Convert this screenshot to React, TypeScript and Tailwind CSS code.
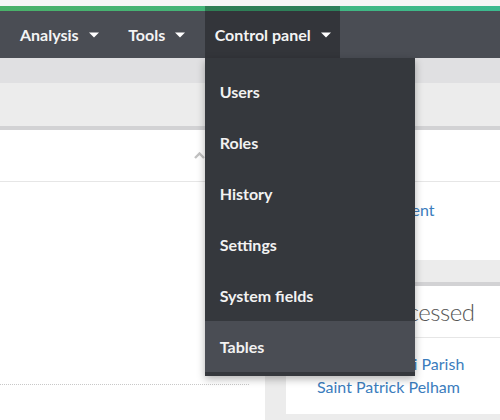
import { Fragment } from "react";

const navItems = ["Analysis", "Tools", "Control panel"];
const menuItems = ["Users", "Roles", "History", "Settings", "System fields", "Tables"];

function Caret() {
  return (
    <svg width="10" height="6" viewBox="0 0 10 6" className="ml-[10px]">
      <path d="M0 0.5h10L5 5.5z" fill="#ffffff" />
    </svg>
  );
}

export default function App() {
  return (
    <div className="w-[500px] h-[420px] overflow-hidden bg-[#ececec] font-['Lato','Open_Sans',sans-serif]">
      <div className="h-[6px] bg-[#f6f6f6]" />

      {/* navbar: green strip on top, gray bar below */}
      <div className="h-[52px] flex pl-[10px] gap-[10.5px] bg-[image:linear-gradient(to_bottom,transparent_5px,#4a4d54_5px),linear-gradient(to_right,#4ab169,#3cba8f)]">
        {navItems.map((item) => {
          const active = item === "Control panel";
          return (
            <div
              key={item}
              className={
                active
                  ? "relative flex items-center pt-[5px] pl-[10px] pr-[9px] bg-black/30"
                  : "relative flex items-center pt-[5px] pl-[10px] pr-[9px]"
              }
            >
              <span className="text-[16px] font-bold text-[#f4f4f4]">{item}</span>
              <Caret />
              {active && (
                <div className="absolute left-0 top-full w-[210px] pt-[8px] pb-[4px] bg-[#35383d] shadow-[0_3px_8px_rgba(0,0,0,0.3)] z-10">
                  {menuItems.map((m) => (
                    <div
                      key={m}
                      className={
                        m === "Tables"
                          ? "h-[51px] flex items-center pl-[15px] text-[16px] font-bold text-[#f2f2f2] bg-[#4a4d54]"
                          : "h-[51px] flex items-center pl-[15px] text-[16px] font-bold text-[#f2f2f2]"
                      }
                    >
                      {m}
                    </div>
                  ))}
                </div>
              )}
            </div>
          );
        })}
      </div>

      <div className="h-[25px] bg-[#e0e0e2]" />
      <div className="h-[43px] bg-[#ececec]" />

      <div className="flex gap-[21px]">
        {/* left panel */}
        <div className="w-[265px] shrink-0 h-[300px] bg-white border-t-4 border-[#d2d2d4]">
          <div className="h-[52px] flex items-center justify-end pr-[60px] border-b border-[#e6e6e6]">
            <svg width="11" height="7" viewBox="0 0 11 7">
              <path d="M1 6l4.5-4.5 4.5 4.5" fill="none" stroke="#c2c2c2" strokeWidth="2.4" />
            </svg>
          </div>
          <div className="w-[249px] h-[203px] border-b border-dotted border-[#c8c8c8]" />
        </div>

        {/* right column */}
        <div className="flex-1 min-w-0 flex flex-col gap-[22px]">
          <div className="h-[134px] bg-white border-t-4 border-[#d2d2d4]">
            <div className="h-[52px] flex items-center pl-[10px] border-b border-[#e6e6e6] text-[22px] text-[#555]">
              Actions
            </div>
            <div className="pt-[17px] pl-[38px] text-[16px] leading-[22px] text-[#3b7dbd] whitespace-nowrap">Register patient</div>
          </div>

          <div className="h-[132px] bg-white border-t-4 border-[#d2d2d4]">
            <div className="h-[52px] flex items-center pl-[10px] border-b border-[#e6e6e6] text-[24px] font-light tracking-[-0.5px] text-[#555] whitespace-nowrap">
              Recently accessed
            </div>
            <div className="pt-[14px] pl-[31px] text-[16px] leading-[23px] text-[#3b7dbd] whitespace-nowrap">
              {["Corpus Christi Parish", "Saint Patrick Pelham"].map((l) => (
                <Fragment key={l}>
                  <div>{l}</div>
                </Fragment>
              ))}
            </div>
          </div>
        </div>
      </div>
    </div>
  );
}
